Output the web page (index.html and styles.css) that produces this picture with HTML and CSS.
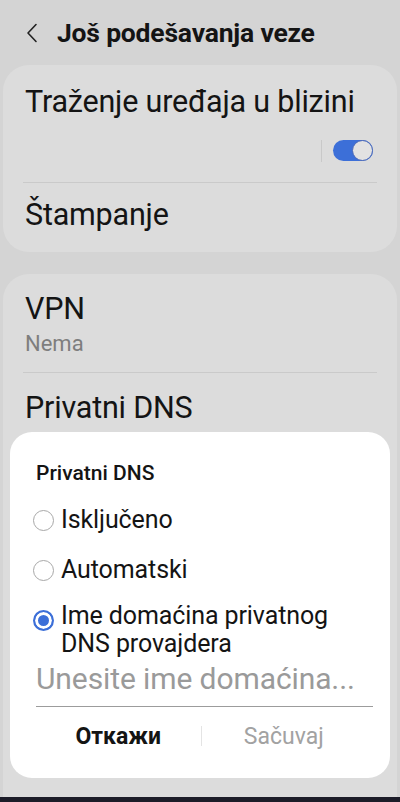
FILE: index.html
```html
<!DOCTYPE html>
<html lang="sr">
<head>
<meta charset="utf-8">
<title>Još podešavanja veze</title>
<link rel="stylesheet" href="styles.css">
</head>
<body>
<div class="screen">
  <header class="header">
    <svg class="back" width="12" height="20" viewBox="0 0 12 20"><path d="M10 1.5 L2 10 L10 18.5" fill="none" stroke="#222" stroke-width="1.6" stroke-linecap="round" stroke-linejoin="round"/></svg>
    <h1 class="title">Još podešavanja veze</h1>
  </header>

  <section class="card card-first">
    <div class="item item-toggle">
      <div class="item-title">Traženje uređaja u blizini</div>
      <div class="toggle-row">
        <span class="vsep"></span>
        <span class="toggle"><span class="thumb"></span></span>
      </div>
    </div>
    <div class="divider"></div>
    <div class="item item-print">
      <div class="item-title">Štampanje</div>
    </div>
  </section>

  <section class="card card-second">
    <div class="item item-vpn">
      <div class="item-title">VPN</div>
      <div class="item-sub">Nema</div>
    </div>
    <div class="divider"></div>
    <div class="item item-dns">
      <div class="item-title">Privatni DNS</div>
    </div>
  </section>

  <div class="navbar"></div>

  <div class="dialog">
    <div class="dialog-title">Privatni DNS</div>
    <div class="options">
      <div class="option"><span class="radio"></span><span class="opt-label">Isključeno</span></div>
      <div class="option"><span class="radio"></span><span class="opt-label">Automatski</span></div>
      <div class="option option-multi"><span class="radio radio-on"></span><span class="opt-label">Ime domaćina privatnog<br>DNS provajdera</span></div>
    </div>
    <div class="input">Unesite ime domaćina...</div>
    <div class="buttons">
      <span class="btn btn-cancel">Откажи</span>
      <span class="btn-sep"></span>
      <span class="btn btn-save">Sačuvaj</span>
    </div>
  </div>
</div>
</body>
</html>
```

FILE: styles.css
```css
html, body {
  margin: 0;
  padding: 0;
}
body {
  background: #d4d4d4;
  font-family: Roboto, "Noto Sans", "Liberation Sans", sans-serif;
  color: #141414;
}
.screen {
  position: relative;
  width: 400px;
  height: 802px;
  overflow: hidden;
  display: flex;
  flex-direction: column;
}
.header {
  height: 65px;
  display: flex;
  align-items: center;
  padding-left: 26px;
  gap: 19px;
  box-sizing: border-box;
}
.back {
  display: block;
}
.title {
  margin: 0;
  font-size: 26.5px;
  font-weight: 700;
  letter-spacing: -0.2px;
  color: #141414;
}
.card {
  margin: 0 3px;
  background: #dcdcdc;
  border-radius: 26px;
}
.card-first {
  margin-bottom: 22px;
}
.card-second {
  flex: 1;
  border-bottom-left-radius: 0;
  border-bottom-right-radius: 0;
}
.item {
  padding: 0 22px;
}
.item-title {
  font-size: 30.5px;
  line-height: 36px;
  letter-spacing: -0.2px;
}
.item-toggle {
  padding-top: 19px;
  padding-bottom: 21px;
}
.toggle-row {
  display: flex;
  justify-content: flex-end;
  align-items: center;
  gap: 11px;
  height: 21px;
  margin-top: 20px;
  padding-right: 2px;
}
.vsep {
  width: 1px;
  height: 22px;
  background: #c9c9c9;
}
.toggle {
  position: relative;
  width: 40px;
  height: 21px;
  border-radius: 11px;
  background: #3c6fd8;
}
.thumb {
  position: absolute;
  right: 0;
  top: 0;
  width: 19px;
  height: 19px;
  border-radius: 50%;
  background: #e2e2e2;
  border: 1px solid #4a68b8;
}
.divider {
  height: 1px;
  background: #cacaca;
  margin: 0 20px;
}
.item-print {
  padding-top: 14px;
  padding-bottom: 19px;
}
.item-vpn {
  padding-top: 17px;
  padding-bottom: 15px;
}
.item-sub {
  font-size: 22px;
  line-height: 26px;
  color: #7e7e7e;
  margin-top: 4px;
}
.item-dns {
  padding-top: 17px;
}
.navbar {
  position: absolute;
  left: 0;
  right: 0;
  bottom: 0;
  height: 5px;
  background: #1c1c28;
}
.dialog {
  position: absolute;
  left: 10px;
  top: 432px;
  width: 380px;
  height: 346px;
  background: #ffffff;
  border-radius: 22px;
  box-sizing: border-box;
  padding: 28px 17px 0 26px;
  display: flex;
  flex-direction: column;
}
.dialog-title {
  font-size: 21px;
  font-weight: 500;
  line-height: 26px;
  color: #141414;
}
.options {
  display: flex;
  flex-direction: column;
  margin-top: 9px;
}
.option {
  display: flex;
  align-items: center;
  gap: 7px;
  height: 50px;
}
.option-multi {
  height: auto;
  align-items: flex-start;
  padding-top: 7px;
}
.option-multi .radio {
  margin-top: 8px;
}
.radio {
  flex: none;
  width: 21px;
  height: 21px;
  border-radius: 50%;
  border: 1px solid #a8a8a8;
  box-sizing: border-box;
  margin-left: -3px;
}
.radio-on {
  border: 2px solid #3c6fd8;
  background: #3c6fd8;
  box-shadow: inset 0 0 0 3px #ffffff;
}
.opt-label {
  font-size: 25px;
  line-height: 28px;
  color: #141414;
  letter-spacing: -0.1px;
}
.input {
  margin-top: 4px;
  font-size: 30px;
  line-height: 34px;
  color: #9a9a9a;
  padding-bottom: 10px;
  border-bottom: 1px solid #9c9c9c;
  letter-spacing: -0.1px;
  white-space: nowrap;
}
.buttons {
  display: flex;
  align-items: center;
  height: 58px;
  margin-right: 7px;
}
.btn {
  flex: 1;
  text-align: center;
  font-size: 23px;
}
.btn-cancel {
  font-weight: 700;
  color: #141414;
}
.btn-save {
  color: #a2a2a2;
}
.btn-sep {
  width: 1px;
  height: 20px;
  background: #e4e4e4;
}
```
